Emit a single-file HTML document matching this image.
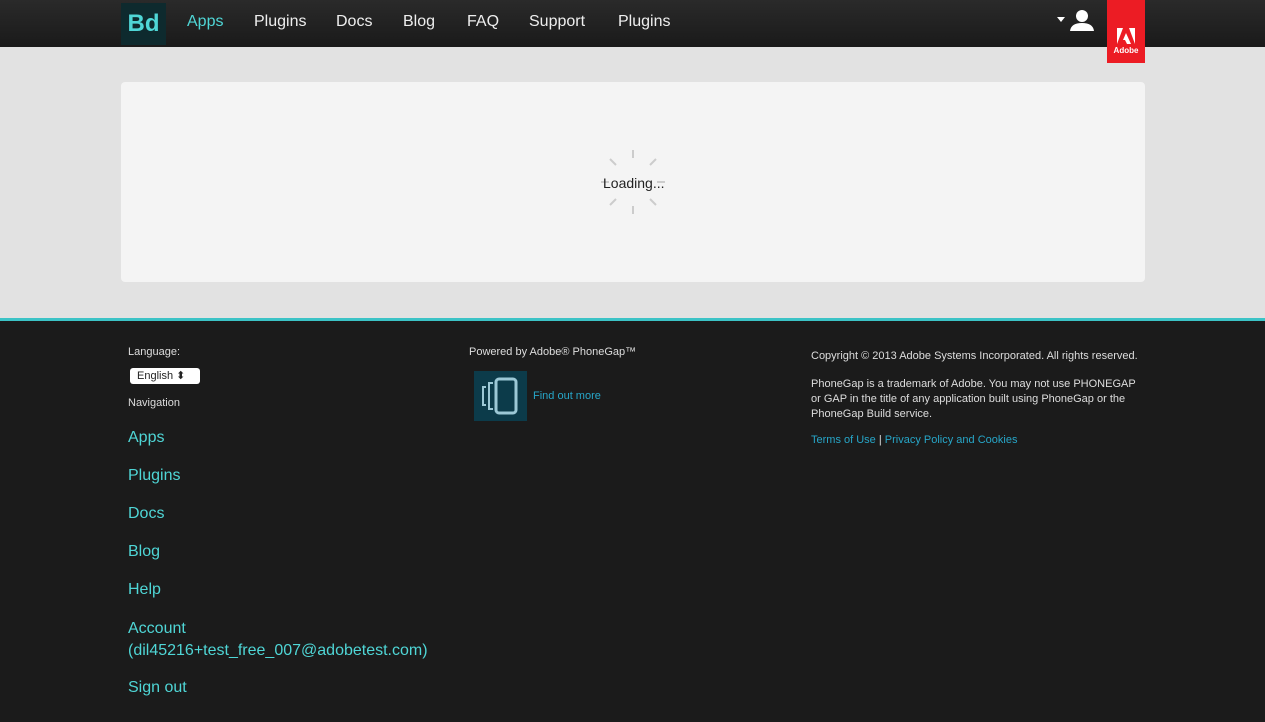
<!DOCTYPE html>
<html><head><meta charset="utf-8"><style>
*{margin:0;padding:0;box-sizing:border-box}
body{width:1265px;height:722px;overflow:hidden;background:#1b1b1b;font-family:"Liberation Sans",sans-serif}
.top{position:absolute;left:0;top:0;width:1265px;height:47px;background:linear-gradient(#2a2a2a,#1a1a1a)}
.logo{position:absolute;left:121px;top:3px;width:45px;height:42px;background:#0e2a2e;color:#4fd6d6;font-size:24px;font-weight:bold;line-height:42px;text-align:center}
.nav a{position:absolute;top:13px;font-size:16px;color:#eee;text-decoration:none}
.adobe{position:absolute;z-index:5;left:1107px;top:0;width:38px;height:63px;background:#ec1c24;color:#fff;font-size:8px;font-weight:bold;text-align:center}
.main{position:absolute;left:0;top:47px;width:1265px;height:271px;background:#e2e2e2}
.card{position:absolute;left:121px;top:82px;width:1024px;height:200px;background:#f4f4f4;border-radius:4px}
.teal{position:absolute;left:0;top:318px;width:1265px;height:3px;background:#3cc3c6}
.f{position:absolute;color:#ddd;font-size:11px}
.l{position:absolute;left:128px;color:#4fd6d6;font-size:16px}
.s{color:#27a6c8}
</style></head><body>
<div class="top"></div>
<div class="logo">Bd</div>
<div class="nav"><a style="left:187px;color:#4fd6d6">Apps</a><a style="left:254px">Plugins</a><a style="left:336px">Docs</a><a style="left:403px">Blog</a><a style="left:467px">FAQ</a><a style="left:529px">Support</a><a style="left:618px">Plugins</a></div>
<div style="position:absolute;left:1057px;top:17px;border:4px solid transparent;border-top:5px solid #fff"></div>
<svg style="position:absolute;left:1069px;top:9px" width="26" height="22"><circle cx="13" cy="7" r="6" fill="#fff"/><path d="M1 22 Q2 14 13 14 Q24 14 25 22Z" fill="#fff"/></svg>
<div class="main"></div>
<div class="adobe"><svg width="22" height="20" style="margin-top:26px;display:block;margin-left:8px"><path d="M2 18 L8 2 L2 2Z M20 18 L14 2 L20 2Z M11 7 L16 18 L12 18 L10 14 L8 14Z" fill="#fff"/></svg><div>Adobe</div></div>
<div class="card"></div>
<svg style="position:absolute;left:599px;top:148px" width="68" height="68"><g stroke="#ccc" stroke-width="2">
<line x1="34" y1="2" x2="34" y2="10"/><line x1="34" y1="58" x2="34" y2="66"/><line x1="2" y1="34" x2="10" y2="34"/><line x1="58" y1="34" x2="66" y2="34"/><line x1="11" y1="11" x2="17" y2="17"/><line x1="51" y1="51" x2="57" y2="57"/><line x1="57" y1="11" x2="51" y2="17"/><line x1="11" y1="57" x2="17" y2="51"/></g></svg>
<div style="position:absolute;left:603px;top:175px;font-size:14px;color:#222">Loading...</div>
<div class="teal"></div>
<div class="f" style="left:128px;top:346px">Language:</div>
<div style="position:absolute;left:130px;top:368px;width:70px;height:16px;background:#fff;border-radius:3px;font-size:11px;color:#222;padding-left:7px;line-height:17px">English ⬍</div>
<div class="f" style="left:128px;top:397px">Navigation</div>
<div class="l" style="top:429px">Apps</div><div class="l" style="top:467px">Plugins</div><div class="l" style="top:505px">Docs</div><div class="l" style="top:543px">Blog</div><div class="l" style="top:581px">Help</div><div class="l" style="top:618px;line-height:22px">Account<br>(dil45216+test_free_007@adobetest.com)</div><div class="l" style="top:679px">Sign out</div>
<div class="f" style="left:469px;top:346px">Powered by Adobe® PhoneGap™</div>
<div style="position:absolute;left:474px;top:371px;width:53px;height:50px;background:#0c3b4a"><svg width="53" height="50"><rect x="22" y="8" width="20" height="34" rx="3" fill="none" stroke="#9cc8d6" stroke-width="3"/><path d="M19 12 h-4 v26 h4 M12 16 h-3 v18 h3" fill="none" stroke="#9cc8d6" stroke-width="2"/></svg></div>
<div class="f s" style="left:533px;top:390px">Find out more</div>
<div class="f" style="left:811px;top:350px">Copyright © 2013 Adobe Systems Incorporated. All rights reserved.</div>
<div class="f" style="left:811px;top:377px;width:330px;line-height:15px">PhoneGap is a trademark of Adobe. You may not use PHONEGAP or GAP in the title of any application built using PhoneGap or the PhoneGap Build service.</div>
<div class="f" style="left:811px;top:434px"><span class="s">Terms of Use</span> | <span class="s">Privacy Policy and Cookies</span></div>
</body></html>
